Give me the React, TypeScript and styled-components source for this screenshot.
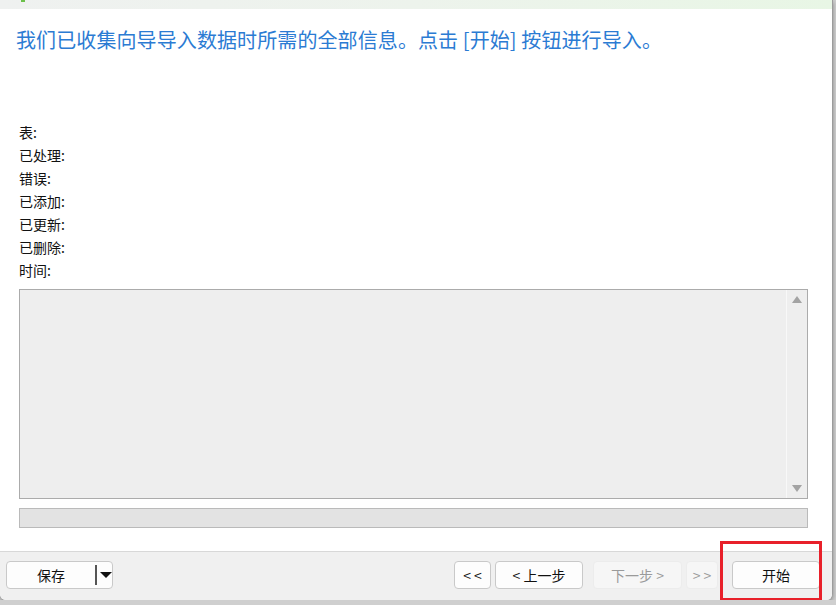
import styled, { createGlobalStyle } from 'styled-components';

const Global = createGlobalStyle`
  html, body {
    margin: 0;
    padding: 0;
    background: #cfcfcf;
    font-family: "Noto Sans CJK SC", "Noto Sans", sans-serif;
  }
`;

const Window = styled.div`
  width: 832px;
  height: 600px;
  display: flex;
  flex-direction: column;
  background: #fff;
  border-right: 1px solid #9c9c9c;
  border-radius: 0 0 6px 6px;
  box-shadow: 0 2px 4px rgba(0, 0, 0, 0.35);
  overflow: hidden;
`;

const TopStrip = styled.div`
  height: 9px;
  flex: none;
  background: linear-gradient(90deg, #eff1f0 0%, #edf3ec 50%, #e8f6e5 100%);
  position: relative;
`;

const Mark = styled.div`
  position: absolute;
  left: 21px;
  top: 0;
  width: 4px;
  height: 2px;
  background: #6cc04a;
`;

const Content = styled.div`
  flex: 1;
  display: flex;
  flex-direction: column;
  padding: 17px 24px 0 19px;
`;

const Title = styled.div`
  margin-left: -3px;
  font-size: 20px;
  letter-spacing: 0.1px;
  line-height: 28px;
  color: #2b7bd3;
  white-space: nowrap;
`;

const Labels = styled.div`
  margin-top: 67px;
  display: flex;
  flex-direction: column;
`;

const Label = styled.div`
  font-size: 14px;
  line-height: 23px;
  height: 23px;
  color: #111;
`;

const LogBox = styled.div`
  margin-top: 7px;
  height: 208px;
  border: 1px solid #ababab;
  background: #eeeeee;
  display: flex;
  justify-content: flex-end;
`;

const ScrollTrack = styled.div`
  width: 20px;
  border-left: 1px solid #f8f8f8;
  display: flex;
  flex-direction: column;
  justify-content: space-between;
  align-items: center;
  padding: 6px 0 6px;
`;

const Arrow = styled.div<{ $down?: boolean }>`
  width: 0;
  height: 0;
  border-left: 5px solid transparent;
  border-right: 5px solid transparent;
  ${(p) =>
    p.$down ? 'border-top: 7px solid #a3a3a3;' : 'border-bottom: 7px solid #a3a3a3;'}
`;

const Progress = styled.div`
  margin-top: 9px;
  height: 18px;
  border: 1px solid #bababa;
  background: #e3e3e3;
`;

const Footer = styled.div`
  flex: none;
  box-sizing: border-box;
  height: 49px;
  border-top: 1px solid #d8d8d8;
  background: #f0f0f0;
  display: flex;
  align-items: flex-start;
  padding: 9px 11px 0 6px;
`;

const Btn = styled.button<{ $w: number; $off?: boolean }>`
  width: ${(p) => p.$w}px;
  height: 28px;
  box-sizing: border-box;
  border-radius: 4px;
  border: 1px solid ${(p) => (p.$off ? '#ececec' : '#c9c9c9')};
  background: ${(p) => (p.$off ? '#f6f6f6' : '#fdfdfd')};
  color: ${(p) => (p.$off ? '#9a9a9a' : '#111')};
  font-family: "Noto Sans CJK SC", "Noto Sans", sans-serif;
  font-size: 14px;
  padding: 0;
  display: flex;
  align-items: center;
  justify-content: center;
  white-space: pre;
`;

const SplitBtn = styled(Btn)`
  justify-content: flex-start;
`;

const SplitLabel = styled.span`
  width: 88px;
  text-align: center;
`;

const SplitBar = styled.span`
  width: 2px;
  height: 20px;
  background: #555;
`;

const Caret = styled.span`
  margin-left: 3px;
  width: 0;
  height: 0;
  border-left: 6px solid transparent;
  border-right: 6px solid transparent;
  border-top: 6px solid #111;
`;

const Spacer = styled.div`
  flex: 1;
`;

const Nav = styled.div`
  display: flex;
`;

const StartWrap = styled.div`
  position: relative;
  margin-left: 14px;
  margin-right: 1px;
`;

const Highlight = styled.div`
  position: absolute;
  left: -12px;
  top: -20px;
  width: 96px;
  height: 54px;
  border: 3px solid #e8202a;
  pointer-events: none;
`;

const labels = ['表:', '已处理:', '错误:', '已添加:', '已更新:', '已删除:', '时间:'];

export default function App() {
  return (
    <>
      <Global />
      <Window>
        <TopStrip>
          <Mark />
        </TopStrip>
        <Content>
          <Title>我们已收集向导导入数据时所需的全部信息。点击 [开始] 按钮进行导入。</Title>
          <Labels>
            {labels.map((l) => (
              <Label key={l}>{l}</Label>
            ))}
          </Labels>
          <LogBox>
            <ScrollTrack>
              <Arrow />
              <Arrow $down />
            </ScrollTrack>
          </LogBox>
          <Progress />
        </Content>
        <Footer>
          <SplitBtn $w={107}>
            <SplitLabel>保存</SplitLabel>
            <SplitBar />
            <Caret />
          </SplitBtn>
          <Spacer />
          <Nav>
            <Btn $w={37}>{'< <'}</Btn>
            <Btn $w={88} style={{ marginLeft: 4 }}>{'< 上一步'}</Btn>
            <Btn $w={89} $off style={{ marginLeft: 10 }}>{'下一步 >'}</Btn>
            <Btn $w={32} $off style={{ marginLeft: 4 }}>{'> >'}</Btn>
          </Nav>
          <StartWrap>
            <Btn $w={88}>开始</Btn>
            <Highlight />
          </StartWrap>
        </Footer>
      </Window>
    </>
  );
}
